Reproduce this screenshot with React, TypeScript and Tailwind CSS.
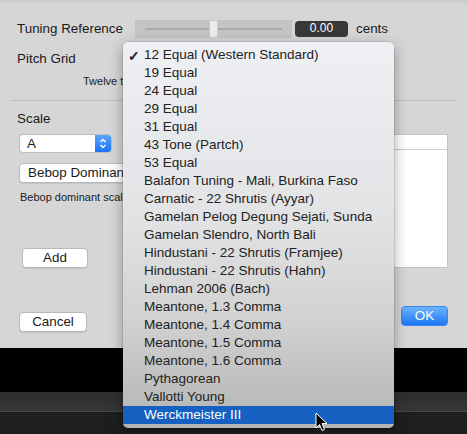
import React from "react";

const items = [
  "12 Equal (Western Standard)",
  "19 Equal",
  "24 Equal",
  "29 Equal",
  "31 Equal",
  "43 Tone (Partch)",
  "53 Equal",
  "Balafon Tuning - Mali, Burkina Faso",
  "Carnatic - 22 Shrutis (Ayyar)",
  "Gamelan Pelog Degung Sejati, Sunda",
  "Gamelan Slendro, North Bali",
  "Hindustani - 22 Shrutis (Framjee)",
  "Hindustani - 22 Shrutis (Hahn)",
  "Lehman 2006 (Bach)",
  "Meantone, 1.3 Comma",
  "Meantone, 1.4 Comma",
  "Meantone, 1.5 Comma",
  "Meantone, 1.6 Comma",
  "Pythagorean",
  "Vallotti Young",
  "Werckmeister III",
];

const font = { fontFamily: '"Liberation Sans", Arial, sans-serif' };

function PushButton({ label, className }: { label: string; className: string }) {
  return (
    <div
      className={`flex h-[20px] items-center justify-center rounded-[4px] border border-[#b9b9b9] bg-white text-[13.4px] text-[#1a1a1a] shadow-[0_1px_0_rgba(0,0,0,0.08)] ${className}`}
    >
      {label}
    </div>
  );
}

export default function App() {
  return (
    <div className="relative h-[434px] w-[467px] overflow-hidden bg-[#1e1e1e]" style={font}>
      {/* Dialog */}
      <div className="relative h-[348px] bg-[#d6d6d6] bg-gradient-to-b from-[#c9c9c9] from-[0px] to-[#d6d6d6] to-[5px] text-[13.4px] leading-[19.5px] text-[#1a1a1a]">
        {/* Tuning reference */}
        <div className="flex items-center pl-[17px] pt-[19px]">
          <span className="w-[118px]">Tuning Reference</span>
          <div className="relative flex h-[18px] w-[157px] items-center bg-[#c4c4c4] px-[10px]">
            <div className="h-[2px] w-full bg-[#a9a9a9]" />
            <div className="absolute left-[74px] top-0 h-[18px] w-[9px] rounded-[2px] border border-[#c8c8c8] bg-[#ececec]" />
          </div>
          <div className="ml-[3px] flex h-[16px] w-[53px] items-center justify-center rounded-[4px] bg-[#383838] text-[12px] text-white">
            0.00
          </div>
          <span className="ml-[8px]">cents</span>
        </div>

        {/* Pitch grid */}
        <div className="mt-[10px] pl-[17px]">Pitch Grid</div>
        <div className="ml-[83px] mt-[5px] whitespace-nowrap text-[11px] leading-[16.5px]">
          Twelve tone equal temperament
        </div>

        <div className="mx-[10px] mt-[10px] h-px bg-[#bdbdbd]" />

        {/* Scale */}
        <div className="mt-[8px] pl-[17px]">Scale</div>
        <div className="mt-[6px] flex items-start">
          <div className="ml-[19px] flex h-[19px] w-[93px] items-stretch overflow-hidden rounded-[4px] border border-[#bdbdbd] bg-white">
            <span className="flex-1 pl-[7px] leading-[17px]">A</span>
            <div className="flex w-[16px] items-center justify-center bg-gradient-to-b from-[#5aa3fc] to-[#1b73f5]">
              <svg width="8" height="13" viewBox="0 0 8 13" fill="none" stroke="white" strokeWidth="1.4">
                <path d="M1.5 5 L4 2.5 L6.5 5" />
                <path d="M1.5 8 L4 10.5 L6.5 8" />
              </svg>
            </div>
          </div>
          <div className="ml-auto mr-[19px] h-[134px] w-[250px] border border-[#c4c4c4] bg-white">
            <div className="h-[15px] border-b border-[#cfcfcf]" />
          </div>
        </div>
        <PushButton label="Bebop Dominant" className="-mt-[105px] ml-[19px] w-[160px] justify-start pl-[8px]" />
        <div className="ml-[20px] mt-[6px] whitespace-nowrap text-[11px] leading-[16.5px]">
          Bebop dominant scale
        </div>
        <PushButton label="Add" className="ml-[22px] mt-[42px] w-[66px]" />
        <div className="mt-[44px] flex items-center">
          <PushButton label="Cancel" className="ml-[19px] w-[68px]" />
          <div className="-mt-[12px] ml-auto mr-[19px] flex h-[20px] w-[47px] items-center justify-center rounded-[4px] border border-[#3a86f0] bg-gradient-to-b from-[#6cb3fa] to-[#1a76f6] text-[13.4px] text-white">
            OK
          </div>
        </div>
      </div>

      {/* Bottom bands */}
      <div className="h-[44px] bg-black" />
      <div className="h-[19px] bg-gradient-to-b from-[#2e2e2e] to-[#363636]" />
      <div className="h-px bg-[#484848]" />

      {/* Popup menu */}
      <div className="absolute left-[123px] top-[42px] w-[271px] rounded-[5px] bg-[linear-gradient(to_bottom,#eff0f3_0%,#e2e3e5_45%,#d3d3d3_70%,#b4b4b4_100%)] py-[4px] text-[13.5px] text-[#222] shadow-[0_4px_14px_rgba(0,0,0,0.35),0_0_0_0.5px_rgba(0,0,0,0.15)]">
        {items.map((it, i) => {
          const sel = i === items.length - 1;
          return (
            <div
              key={it}
              className={`relative flex h-[18px] items-center whitespace-nowrap pl-[21px] ${sel ? "bg-[#1560c0] text-white" : ""}`}
            >
              {i === 0 && <span className="absolute left-[5px] top-[0px] text-[14px] font-bold">✓</span>}
              {it}
            </div>
          );
        })}
      </div>

      {/* Mouse cursor */}
      <svg className="absolute left-[315px] top-[412px]" width="13" height="20" viewBox="0 0 13 20">
        <path d="M1 1 L1 16 L4.5 12.5 L7 18.5 L9.5 17.5 L7 11.5 L12 11.5 Z" fill="black" stroke="white" strokeWidth="1" />
      </svg>
    </div>
  );
}
